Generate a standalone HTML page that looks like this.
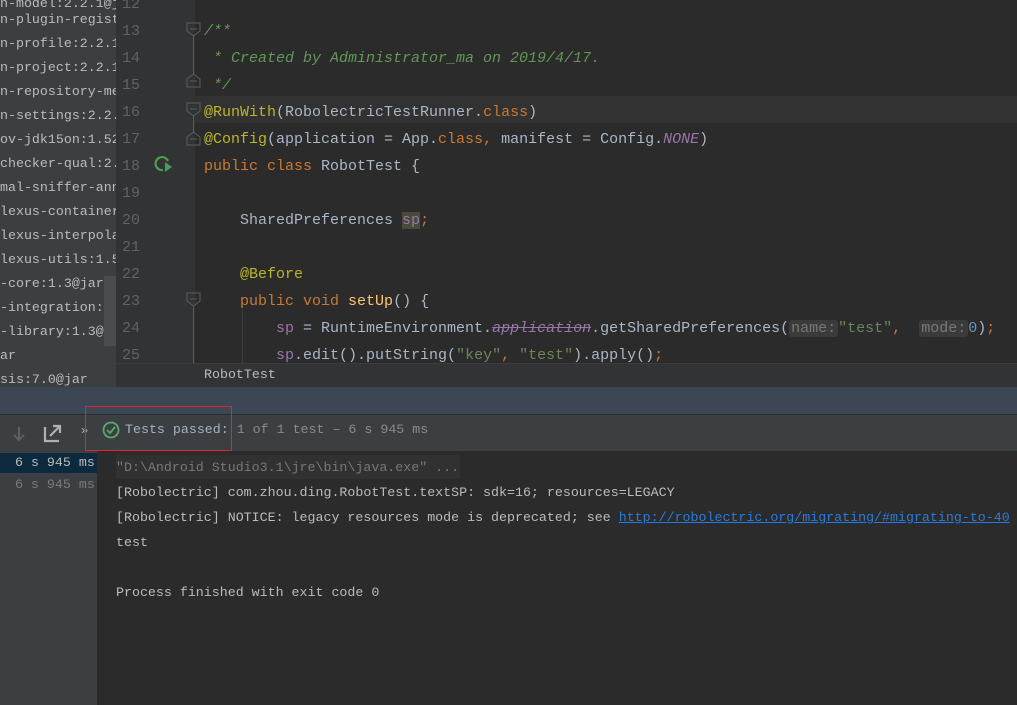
<!DOCTYPE html>
<html><head><meta charset="utf-8"><style>
*{margin:0;padding:0;box-sizing:border-box}
body{width:1017px;height:705px;overflow:hidden;background:#2b2b2b;position:relative;font-family:"Liberation Mono","Noto Sans CJK SC",monospace}
.abs{position:absolute;white-space:pre}
#tree{left:0;top:0;width:116px;height:387px;background:#3c3f41;overflow:hidden}
#tree div{position:absolute;left:0;font-size:13.3px;color:#bbbbbb;line-height:24px;white-space:pre}
#gut{left:116px;top:0;width:79px;height:363px;background:#313335}
.ln{position:absolute;left:116px;width:24px;text-align:right;font-size:15px;color:#606366;line-height:27px}
.cl{position:absolute;left:204px;font-size:15px;color:#a9b7c6;line-height:27px;white-space:pre}
.k{color:#cc7832}.a{color:#bbb529}.c{color:#629755;font-style:italic}.s{color:#6a8759}.f{color:#9876aa}.m{color:#ffc66d}
.hint{background:#3b3b3b;color:#787878;border-radius:3px;padding:0 2px}
</style></head><body>
<div class="abs" id="tree">
<div style="top:-8px">n-model:2.2.1@j</div>
<div style="top:8px">n-plugin-regist</div>
<div style="top:32px">n-profile:2.2.1</div>
<div style="top:56px">n-project:2.2.1</div>
<div style="top:80px">n-repository-me</div>
<div style="top:104px">n-settings:2.2.</div>
<div style="top:128px">ov-jdk15on:1.52</div>
<div style="top:152px">checker-qual:2.</div>
<div style="top:176px">mal-sniffer-ann</div>
<div style="top:200px">lexus-container</div>
<div style="top:224px">lexus-interpola</div>
<div style="top:248px">lexus-utils:1.5</div>
<div style="top:272px">-core:1.3@jar</div>
<div style="top:296px">-integration:1.</div>
<div style="top:320px">-library:1.3@ja</div>
<div style="top:344px">ar</div>
<div style="top:368px">sis:7.0@jar</div>
<span style="position:absolute;left:104px;top:276px;width:12px;height:70px;background:#4a4c4e"></span>
</div>
<div class="abs" id="gut"></div>
<div class="abs" style="left:195px;top:96px;width:822px;height:27px;background:#323232"></div>
<div class="ln" style="top:-9px">12</div><div class="ln" style="top:18px">13</div><div class="ln" style="top:45px">14</div><div class="ln" style="top:72px">15</div><div class="ln" style="top:99px">16</div><div class="ln" style="top:126px">17</div><div class="ln" style="top:153px">18</div><div class="ln" style="top:180px">19</div><div class="ln" style="top:207px">20</div><div class="ln" style="top:234px">21</div><div class="ln" style="top:261px">22</div><div class="ln" style="top:288px">23</div><div class="ln" style="top:315px">24</div><div class="ln" style="top:342px">25</div>
<svg class="abs" style="left:150px;top:152px" width="24" height="24"><path d="M13 18 A6.5 6.5 0 1 1 18 9" fill="none" stroke="#499c54" stroke-width="2.2"/><path d="M15 10 L22 15 L15 20 Z" fill="#499c54"/></svg>
<svg class="abs" style="left:186px;top:20px" width="16" height="345"><g fill="none" stroke="#5a5d5f" stroke-width="1"><path d="M1 3h13v8l-6.5 5l-6.5-5z M4 9h7 M7.5 16v38"/><path d="M1 67v-8l6.5-5l6.5 5v8z M4 61h7"/><path d="M1 83h13v8l-6.5 5l-6.5-5z M4 89h7 M7.5 96v16"/><path d="M1 125v-8l6.5-5l6.5 5v8z M4 119h7"/><path d="M1 273h13v8l-6.5 5l-6.5-5z M4 279h7 M7.5 286v60"/></g></svg>
<div class="abs" style="left:242px;top:310px;width:1px;height:53px;background:#3d3d3d"></div>
<div class="cl" style="top:18px"><span class="c">/**</span></div>
<div class="cl" style="top:45px"><span class="c"> * Created by Administrator_ma on 2019/4/17.</span></div>
<div class="cl" style="top:72px"><span class="c"> */</span></div>
<div class="cl" style="top:99px"><span class="a">@RunWith</span>(RobolectricTestRunner.<span class="k">class</span>)</div>
<div class="cl" style="top:126px"><span class="a">@Config</span>(application = App.<span class="k">class</span><span class="k">,</span> manifest = Config.<i class="f">NONE</i>)</div>
<div class="cl" style="top:153px"><span class="k">public class </span>RobotTest {</div>
<div class="cl" style="top:207px">    SharedPreferences <span class="f" style="background:#4b4a3a">sp</span><span class="k">;</span></div>
<div class="cl" style="top:261px">    <span class="a">@Before</span></div>
<div class="cl" style="top:288px">    <span class="k">public void </span><span class="m">setUp</span>() {</div>
<div class="cl" style="top:315px">        <span class="f">sp</span> = RuntimeEnvironment.<i class="f" style="text-decoration:line-through">application</i>.getSharedPreferences(<span class="hint">name:</span><span class="s">"test"</span><span class="k">,</span>  <span class="hint">mode:</span><span style="color:#6897bb">0</span>)<span class="k">;</span></div>
<div class="cl" style="top:342px">        <span class="f">sp</span>.edit().putString(<span class="s">"key"</span><span class="k">,</span> <span class="s">"test"</span>).apply()<span class="k">;</span></div>
<div class="abs" style="left:116px;top:363px;width:901px;height:25px;background:#313335;border-top:1px solid #3c3c3c"></div>
<div class="abs" style="left:204px;top:364px;font-size:13.3px;color:#bbbbbb;line-height:22px">RobotTest</div>
<div class="abs" style="left:0;top:387px;width:1017px;height:28px;background:#3c4655;border-bottom:1px solid #2b2b2b"></div>
<div class="abs" style="left:0;top:415px;width:1017px;height:36px;background:#3c3f41"></div>
<svg class="abs" style="left:10px;top:424px" width="20" height="20"><path d="M9 3v13M4 11l5 5l5-5" fill="none" stroke="#5d6063" stroke-width="2"/></svg>
<svg class="abs" style="left:43px;top:423px" width="20" height="20"><path d="M2 4v14h14" fill="none" stroke="#afb1b3" stroke-width="2.2"/><path d="M7 13L16 4M10 3h7v7" fill="none" stroke="#afb1b3" stroke-width="2.2"/></svg>
<div class="abs" style="left:81px;top:424px;font-size:12px;color:#afb1b3">»</div>
<div class="abs" style="left:85px;top:406px;width:147px;height:45px;border:1px solid #e0282a"></div>
<svg class="abs" style="left:102px;top:421px" width="18" height="18"><circle cx="9" cy="9" r="7.5" fill="none" stroke="#59a869" stroke-width="1.8"/><path d="M5 9l3 3l5-6" fill="none" stroke="#59a869" stroke-width="1.8"/></svg>
<div class="abs" style="left:125px;top:421px;font-size:13.3px;line-height:18px;color:#a3b3c4">Tests passed: <span style="color:#8a8a8a">1 of 1 test – 6 s 945 ms</span></div>
<div class="abs" style="left:0;top:451px;width:97px;height:254px;background:#3c3f41"></div>
<div class="abs" style="left:0;top:453px;width:97px;height:20px;background:#0d293e"></div>
<div class="abs" style="left:15px;top:453px;font-size:13.3px;line-height:20px;color:#bbbbbb">6 s 945 ms</div>
<div class="abs" style="left:15px;top:475px;font-size:13.3px;line-height:20px;color:#7a7a7a">6 s 945 ms</div>
<div class="abs" style="left:116px;top:455px;width:344px;height:24px;background:#313131"></div>
<div class="abs" style="left:116px;top:455px;font-size:13.3px;line-height:25px;color:#bbbbbb"><span style="color:#787878">"D:\Android Studio3.1\jre\bin\java.exe" ...</span>
[Robolectric] com.zhou.ding.RobotTest.textSP: sdk=16; resources=LEGACY
[Robolectric] NOTICE: legacy resources mode is deprecated; see <span style="color:#287bde;text-decoration:underline">http://robolectric.org/migrating/#migrating-to-40</span>
test

Process finished with exit code 0</div>
</body></html>
